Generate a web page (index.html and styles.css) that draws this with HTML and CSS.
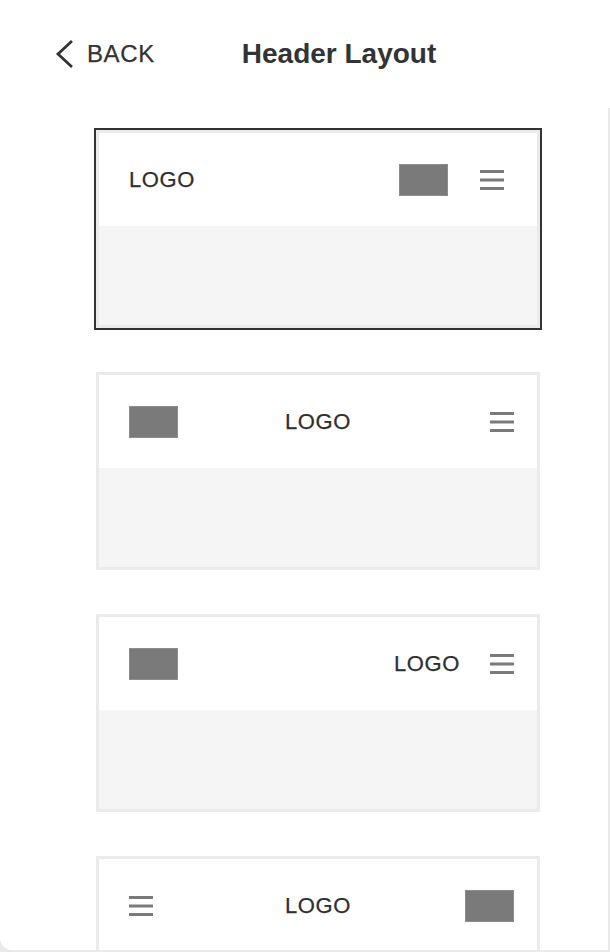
FILE: index.html
```html
<!DOCTYPE html>
<html lang="en">
<head>
<meta charset="utf-8">
<title>Header Layout</title>
<link rel="stylesheet" href="styles.css">
</head>
<body>
<div class="panel">
  <header class="topbar">
    <a class="back" href="#">
      <svg class="chev" width="20" height="30" viewBox="0 0 20 30"><path d="M18 2 L4 15 L18 28" fill="none" stroke="#333" stroke-width="2.8" stroke-linecap="butt" stroke-linejoin="miter"/></svg>
      <span>BACK</span>
    </a>
    <h1 class="title">Header Layout</h1>
  </header>
  <main class="list">
    <div class="card selected">
      <div class="card-head layout-a">
        <span class="logo">LOGO</span>
        <span class="spacer"></span>
        <span class="block"></span>
        <svg class="burger burger-a" width="24" height="20" viewBox="0 0 24 20"><rect y="0" width="24" height="3" fill="#7a7a7a"/><rect y="8.5" width="24" height="3" fill="#7a7a7a"/><rect y="17" width="24" height="3" fill="#7a7a7a"/></svg>
      </div>
      <div class="card-body"></div>
    </div>
    <div class="card">
      <div class="card-head layout-center">
        <span class="block start"></span>
        <span class="logo">LOGO</span>
        <svg class="burger end" width="24" height="20" viewBox="0 0 24 20"><rect y="0" width="24" height="3" fill="#7a7a7a"/><rect y="8.5" width="24" height="3" fill="#7a7a7a"/><rect y="17" width="24" height="3" fill="#7a7a7a"/></svg>
      </div>
      <div class="card-body"></div>
    </div>
    <div class="card">
      <div class="card-head layout-c">
        <span class="block"></span>
        <span class="spacer"></span>
        <span class="logo">LOGO</span>
        <svg class="burger" width="24" height="20" viewBox="0 0 24 20"><rect y="0" width="24" height="3" fill="#7a7a7a"/><rect y="8.5" width="24" height="3" fill="#7a7a7a"/><rect y="17" width="24" height="3" fill="#7a7a7a"/></svg>
      </div>
      <div class="card-body"></div>
    </div>
    <div class="card">
      <div class="card-head layout-center">
        <svg class="burger start" width="24" height="20" viewBox="0 0 24 20"><rect y="0" width="24" height="3" fill="#7a7a7a"/><rect y="8.5" width="24" height="3" fill="#7a7a7a"/><rect y="17" width="24" height="3" fill="#7a7a7a"/></svg>
        <span class="logo">LOGO</span>
        <span class="block end"></span>
      </div>
      <div class="card-body"></div>
    </div>
  </main>
</div>
</body>
</html>
```
FILE: styles.css
```css
* { box-sizing: border-box; }
html, body { margin: 0; padding: 0; }
body {
  background: #e9e9e9;
  width: 610px;
  height: 952px;
  overflow: hidden;
  font-family: "Liberation Sans", Arial, sans-serif;
  color: #333;
}
.panel {
  background: #fff;
  width: 610px;
  height: 950px;
  border-bottom-left-radius: 12px;
  overflow: hidden;
  display: flex;
  flex-direction: column;
}
.topbar {
  height: 108px;
  flex: none;
  display: flex;
  align-items: center;
  padding-left: 54px;
}
.back {
  display: flex;
  align-items: center;
  gap: 13px;
  text-decoration: none;
  color: #333;
  font-size: 24px;
  letter-spacing: 0.6px;
  -webkit-text-stroke: 0.25px #333;
}
.chev { display: block; }
.title {
  margin: 0 0 0 87px;
  font-size: 28px;
  font-weight: bold;
  color: #333;
  letter-spacing: 0;
}
.list {
  flex: 1;
  border-right: 2px solid #e9e9e9;
  padding: 22px 0 0 96px;
  display: flex;
  flex-direction: column;
  gap: 44px;
}
.card {
  flex: none;
  width: 444px;
  height: 198px;
  border: 3px solid #ebebeb;
  display: flex;
  flex-direction: column;
}
.card.selected {
  outline: 2px solid #333;
}
.card-head {
  height: 93px;
  flex: none;
  background: #fff;
  display: flex;
  align-items: center;
  padding: 0 23px 0 30px;
}
.card-body {
  flex: 1;
  background: #f5f5f5;
}
.logo {
  font-size: 22px;
  letter-spacing: 0.6px;
  color: #2f2f2f;
  line-height: 1;
  -webkit-text-stroke: 0.25px #2f2f2f;
}
.spacer { flex: 1; }
.block {
  display: block;
  width: 49px;
  height: 32px;
  background: #7a7a7a;
  border: 1px solid #8c8c8c;
}
.burger { display: block; flex: none; }
.layout-a .block { margin-right: 32px; }
.layout-a .burger-a { margin-right: 10px; }
.layout-c .logo { margin-right: 30px; }
.layout-center {
  display: grid;
  grid-template-columns: 1fr auto 1fr;
  padding: 0 23px;
}
.layout-center .start { margin-left: 7px; }
.layout-center .end { justify-self: end; }
```
